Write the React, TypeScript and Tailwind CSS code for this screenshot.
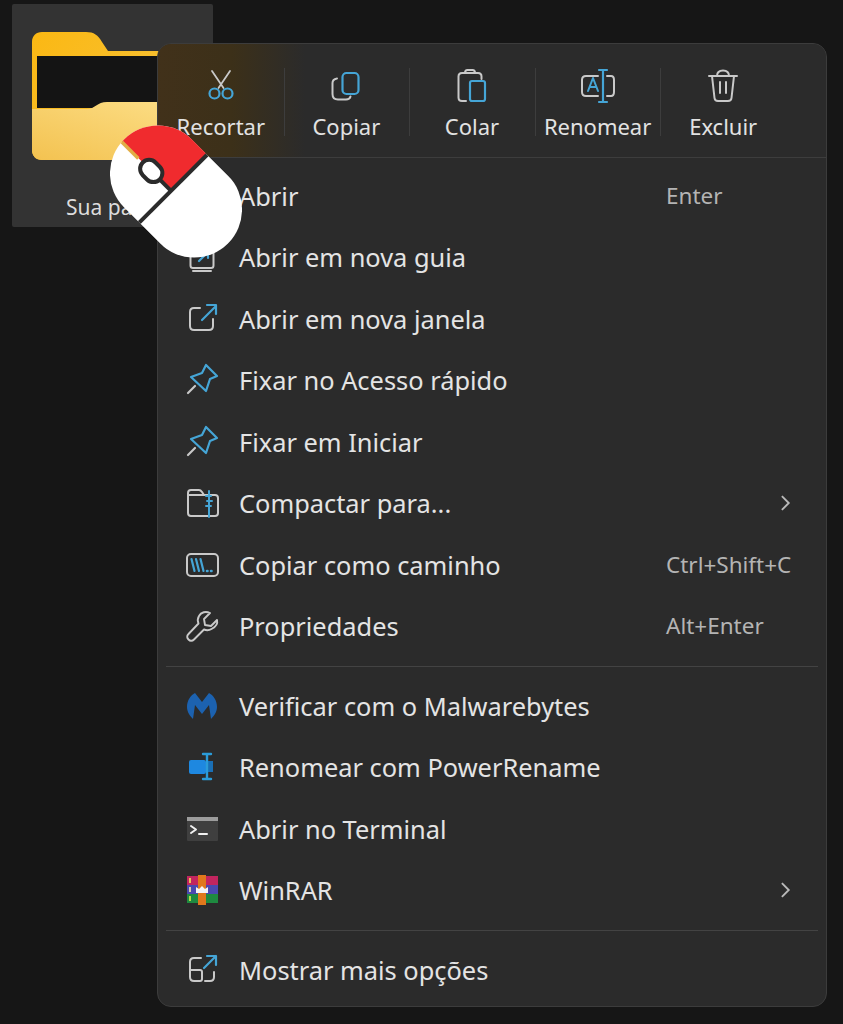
import type { ReactNode } from 'react';

const GREY = '#c9c9c9';
const BLUE = '#45a5d6';

function Icon({ children, className = '' }: { children: ReactNode; className?: string }) {
  return (
    <svg viewBox="0 0 36 36" fill="none" strokeLinecap="round" strokeLinejoin="round" className={`w-9 h-9 shrink-0 ${className}`}>
      {children}
    </svg>
  );
}

const Cut = () => (
  <Icon>
    <g stroke={GREY} strokeWidth="1.8">
      <path d="M9 3l11.5 17M27 3L15.5 20" />
    </g>
    <g stroke={BLUE} strokeWidth="2.200">
      <circle cx="11.5" cy="25.500" r="5" />
      <circle cx="24.5" cy="25.500" r="5" />
    </g>
  </Icon>
);

const Copy = () => (
  <Icon>
    <path d="M9 10.5c-3 .5-4.500 2-4.500 4.500v11c0 3.500 2 5.500 5.500 5.500h8c2.500 0 4-1 4.500-3" stroke={GREY} strokeWidth="2" />
    <rect x="14.500" y="5" width="16" height="21" rx="4" stroke={BLUE} strokeWidth="2.200" />
  </Icon>
);

const Paste = () => (
  <Icon>
    <path d="M12 33H8c-2 0-3.500-1.500-3.500-3.500v-21C4.500 6.500 6 5 8 5h16c2 0 3.500 1.500 3.500 3.500V11M11 5c0-2 1-3 2.500-3h5c1.500 0 2.500 1 2.500 3" stroke={GREY} strokeWidth="2" />
    <rect x="16" y="13" width="15" height="20" rx="2" stroke={BLUE} strokeWidth="2.200" />
  </Icon>
);

const Rename = () => (
  <Icon>
    <path d="M18 8H6C3.500 8 2 9.500 2 12v12c0 2.500 1.500 4 4 4h12M27 8h4c2 0 3 1.500 3 4v12c0 2.500-1 4-3 4h-4" stroke={GREY} strokeWidth="2" />
    <path d="M23 2v32M19 2h8M19 34h8" stroke={BLUE} strokeWidth="2.200" />
    <path d="M8 23l5-13 5 13M10 19h6" stroke={BLUE} strokeWidth="2" />
  </Icon>
);

const Trash = () => (
  <Icon>
    <path d="M4 8h28M12 8c0-4 2-5.500 6-5.500S24 4 24 8M7 8l2.500 22c.2 2 1.500 3 3.500 3h10c2 0 3.300-1 3.500-3L29 8M15 14v11M21 14v11" stroke={GREY} strokeWidth="2" />
  </Icon>
);

const NewTab = () => (
  <Icon>
    <path d="M9 8h18c1.500 0 2.500 1 2.500 2.500v16c0 1.500-1 2.500-2.500 2.500H9c-1.500 0-2.500-1-2.500-2.500v-16C6.500 9 7.500 8 9 8zM9 32h18" stroke={GREY} strokeWidth="2" />
    <path d="M15 22l9-9M18 13h6v6" stroke={BLUE} strokeWidth="2.200" />
  </Icon>
);

const NewWindow = () => (
  <Icon>
    <path d="M16 7h-6c-2.500 0-4 1.500-4 4v14c0 2.500 1.500 4 4 4h15c2.500 0 4-1.500 4-4v-7" stroke={GREY} strokeWidth="2" />
    <path d="M18 19L32 5M23 4h9v9" stroke={BLUE} strokeWidth="2.200" />
  </Icon>
);

const Pin = () => (
  <Icon>
    <path d="M22 3l11 11-7 3-4 12L7 15l11-4z" stroke={BLUE} strokeWidth="2.200" />
    <path d="M11 24l-7 7" stroke={GREY} strokeWidth="2.200" />
  </Icon>
);

const Compress = () => (
  <Icon>
    <path d="M4 10V8c0-2 1-3 3-3h8c1.500 0 2 .6 3 2l2 3h11c2 0 3 1 3 3v15c0 2-1 3-3 3H7c-2 0-3-1-3-3V10h16" stroke={GREY} strokeWidth="2" />
    <path d="M25 6v26M22 11h5M23 16h5M22 21h5" stroke={BLUE} strokeWidth="2" />
  </Icon>
);

const CopyPath = () => (
  <Icon>
    <rect x="3" y="7" width="31" height="22" rx="4" stroke={GREY} strokeWidth="2" />
    <path d="M7.500 12l3 12M12 12l3 12M16.500 12l3 12" stroke={BLUE} strokeWidth="2.200" />
    <path d="M23 24h.5M27 24h.5" stroke={BLUE} strokeWidth="2.600" />
  </Icon>
);

const Wrench = () => (
  <Icon>
    <path d="M33 12l-6 6-6-1-1-6 6-6c-4-2-9-1-11 3-1.500 2.500-1.500 5-.5 7.500L4.500 26c-2 2-1.500 4 0 5.500s3.500 2 5.500 0L20 21.500c2.500 1 5 1 7.500-.5 4-2 6.500-5 5.500-9z" stroke={GREY} strokeWidth="1.900" />
  </Icon>
);

const Malwarebytes = () => (
  <Icon>
    <path d="M3 19C3 12 7 7 11 5l7 9 7-9c4 2 8 7 8 14 0 5-3 9-6 12l-2-14-7 9-7-9-2 14c-3-3-6-7-6-12z" fill="#1c62b0" />
  </Icon>
);

const PowerRename = () => (
  <Icon>
    <rect x="5" y="11" width="17" height="14" rx="2" fill="#1e88e0" />
    <rect x="24" y="12" width="5" height="11" fill="#1a6fb5" />
    <path d="M23 5v25M19 5h8M19 30h8" stroke="#2b9bd8" strokeWidth="2.400" />
  </Icon>
);

const Terminal = () => (
  <Icon>
    <rect x="3" y="6" width="31" height="24" rx="1" fill="#3f3f3f" />
    <rect x="3" y="6" width="31" height="4" fill="#9c9c9c" />
    <path d="M7 15l5 3.500-5 3.500" stroke="#f0f0f0" strokeWidth="2" />
    <path d="M15 23h8" stroke="#f0f0f0" strokeWidth="2" />
  </Icon>
);

const WinRar = () => (
  <Icon>
    <rect x="3" y="4" width="31" height="9" fill="#c2255f" />
    <rect x="3" y="13" width="31" height="9" fill="#4a48b0" />
    <rect x="3" y="22" width="31" height="9" fill="#1e8a40" />
    <rect x="14" y="3" width="8" height="30" fill="#e0781c" />
    <path d="M12 21v-6l3 2 3-3 3 3 3-2v6z" fill="#f4f4f4" />
    <rect x="5" y="6" width="2" height="5" fill="#e8c05a" />
    <rect x="5" y="15" width="2" height="5" fill="#d8cdb0" />
    <rect x="5" y="24" width="2" height="5" fill="#b8d848" />
  </Icon>
);

const MoreOptions = () => (
  <Icon>
    <path d="M17 6H10c-2.500 0-4 1.500-4 4v15c0 2.500 1.500 4 4 4h6c1.500 0 2-1 2-2v-7c0-1-1-2-2-2H6M30 20v5c0 2.500-1.500 4-4 4h-5" stroke={GREY} strokeWidth="2" />
    <path d="M20 16L32 4M23 4h9v9" stroke={BLUE} strokeWidth="2.200" />
  </Icon>
);

const Chevron = () => (
  <svg viewBox="0 0 16 16" fill="none" stroke="#b9b9b9" strokeWidth="1.500" className="w-5 h-5 absolute left-[617px]">
    <path d="M5.500 2.500L11 8l-5.500 5.500" />
  </svg>
);

function ToolButton({ icon, label, first }: { icon: ReactNode; label: string; first?: boolean }) {
  return (
    <div className="relative flex flex-col items-center h-[90px]">
      {!first && <span className="absolute left-0 top-0 h-[68px] w-px bg-[#3d3d3d]" />}
      {icon}
      <span className="mt-[8px] text-[22px] leading-7 text-[#e2e2e2]">{label}</span>
    </div>
  );
}

function Row({ icon, label, shortcut, more }: { icon: ReactNode; label: string; shortcut?: string; more?: boolean }) {
  return (
    <div className="relative flex items-center h-[61.500px] pl-[26px]">
      {icon}
      <span className="ml-[19px] text-[25.400px] text-[#e4e4e4]">{label}</span>
      {shortcut && <span className="absolute left-[508px] text-[22.500px] text-[#b4b4b4]">{shortcut}</span>}
      {more && <Chevron />}
    </div>
  );
}

const Divider = () => <div className="mx-[8px] h-px bg-[#434343]" />;

function Folder() {
  return (
    <svg viewBox="0 0 170 128" className="w-[170px] h-[128px] shrink-0">
      <defs>
        <linearGradient id="back" x1="0" y1="0" x2="1" y2="0.6">
          <stop offset="0" stopColor="#fbb813" />
          <stop offset="1" stopColor="#f6c33c" />
        </linearGradient>
        <linearGradient id="front" x1="0" y1="1" x2="1" y2="0">
          <stop offset="0" stopColor="#f3c250" />
          <stop offset="1" stopColor="#fde08a" />
        </linearGradient>
      </defs>
      <path d="M0 10C0 4 4 0 10 0h44c8 0 12 3 16 10l6 9h84c6 0 10 4 10 10v90c0 6-4 9-10 9H10c-6 0-10-4-10-10z" fill="url(#back)" />
      <rect x="5" y="24" width="165" height="52" fill="#141414" />
      <path d="M0 77h55c8 0 10-7 20-7h95v58H10c-6 0-10-4-10-10z" fill="url(#front)" />
    </svg>
  );
}

function MouseCursor() {
  return (
    <svg viewBox="0 0 132 134" className="absolute left-[110px] top-[125px] w-[132px] h-[134px]">
      <g transform="translate(66 66.500) rotate(-45)">
        <clipPath id="body">
          <rect x="-48" y="-73.500" width="96" height="147" rx="48" />
        </clipPath>
        <g clipPath="url(#body)">
          <rect x="-48" y="-74" width="96" height="148" fill="#ffffff" />
          <rect x="-3" y="-74" width="52" height="69" fill="#f02b2e" />
          <rect x="-5" y="-74" width="3.500" height="24" fill="#e2ad45" />
          <rect x="-48" y="-6" width="96" height="4" fill="#2b2b2b" />
          <path d="M-3-24V-5" stroke="#2b2b2b" strokeWidth="4" />
          <rect x="-12" y="-44" width="18" height="24" rx="9" fill="#ffffff" stroke="#2b2b2b" strokeWidth="4" />
        </g>
      </g>
    </svg>
  );
}

export default function App() {
  return (
    <div className="relative w-[843px] h-[1024px] overflow-hidden bg-[#161616] font-['Noto_Sans',sans-serif]">
      <div className="ml-[12px] pt-[4px]">
        <div className="w-[201px] h-[223px] bg-[#333333] rounded-[2px] pt-[28px] pl-[20px] overflow-hidden">
          <Folder />
          <p className="mt-[32px] ml-[34px] text-[21px] text-[#dcdcdc]">Sua pasta</p>
        </div>
      </div>

      <div className="absolute left-[157px] top-[43px] w-[670px] h-[964px] rounded-[14px] border border-[#3c3c3c] bg-[#2b2b2b] overflow-hidden">
        <div className="h-[114px] border-b border-[#3d3d3d] pt-[24px] bg-[linear-gradient(90deg,#41311a_0%,#3c3019_11%,#2b2b2b_22%)]">
          <div className="grid grid-cols-5 w-[628px]">
            <ToolButton first icon={<Cut />} label="Recortar" />
            <ToolButton icon={<Copy />} label="Copiar" />
            <ToolButton icon={<Paste />} label="Colar" />
            <ToolButton icon={<Rename />} label="Renomear" />
            <ToolButton icon={<Trash />} label="Excluir" />
          </div>
        </div>

        <div className="pt-[7px] pb-[9px]">
          <Row icon={<span className="w-9 h-9 shrink-0" />} label="Abrir" shortcut="Enter" />
          <Row icon={<NewTab />} label="Abrir em nova guia" />
          <Row icon={<NewWindow />} label="Abrir em nova janela" />
          <Row icon={<Pin />} label="Fixar no Acesso rápido" />
          <Row icon={<Pin />} label="Fixar em Iniciar" />
          <Row icon={<Compress />} label="Compactar para..." more />
          <Row icon={<CopyPath />} label="Copiar como caminho" shortcut="Ctrl+Shift+C" />
          <Row icon={<Wrench />} label="Propriedades" shortcut="Alt+Enter" />
        </div>
        <Divider />
        <div className="pt-[8px] pb-[9px]">
          <Row icon={<Malwarebytes />} label="Verificar com o Malwarebytes" />
          <Row icon={<PowerRename />} label="Renomear com PowerRename" />
          <Row icon={<Terminal />} label="Abrir no Terminal" />
          <Row icon={<WinRar />} label="WinRAR" more />
        </div>
        <Divider />
        <div className="pt-[8px]">
          <Row icon={<MoreOptions />} label="Mostrar mais opções" />
        </div>
      </div>

      <MouseCursor />
    </div>
  );
}
